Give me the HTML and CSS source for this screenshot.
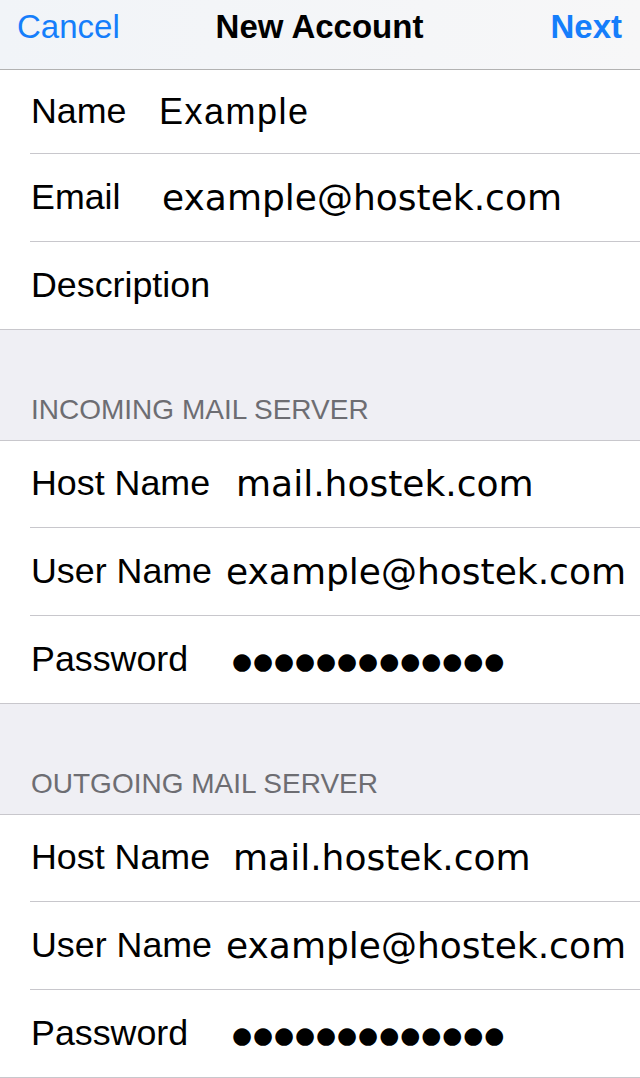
FILE: index.html
```html
<!DOCTYPE html>
<html lang="en">
<head>
    <meta charset="UTF-8">
    <meta name="viewport" content="width=device-width, initial-scale=1.0">
    <title>New Account</title>
    <link rel="stylesheet" href="styles.css">
</head>
<body>
    <!-- Navigation bar -->
    <div class="nav">
        <span class="nav-btn">Cancel</span>
        <span class="nav-title">New Account</span>
        <span class="nav-btn nav-next">Next</span>
    </div>

    <!-- Account details -->
    <div class="group group-account">
        <div class="row row-top">
            <span class="label">Name</span>
            <span class="value value-name">Example</span>
        </div>
        <div class="row">
            <span class="label">Email</span>
            <span class="value value-email">example@hostek.com</span>
        </div>
        <div class="row">
            <span class="label">Description</span>
        </div>
    </div>

    <!-- Incoming server -->
    <div class="section-title">INCOMING MAIL SERVER</div>
    <div class="group group-server">
        <div class="row">
            <span class="label">Host Name</span>
            <span class="value value-host">mail.hostek.com</span>
        </div>
        <div class="row">
            <span class="label">User Name</span>
            <span class="value">example@hostek.com</span>
        </div>
        <div class="row">
            <span class="label">Password</span>
            <span class="value value-password">●●●●●●●●●●●●●</span>
        </div>
    </div>

    <!-- Outgoing server -->
    <div class="section-title">OUTGOING MAIL SERVER</div>
    <div class="group group-server">
        <div class="row">
            <span class="label">Host Name</span>
            <span class="value value-host value-host-out">mail.hostek.com</span>
        </div>
        <div class="row">
            <span class="label">User Name</span>
            <span class="value">example@hostek.com</span>
        </div>
        <div class="row">
            <span class="label">Password</span>
            <span class="value value-password">●●●●●●●●●●●●●</span>
        </div>
    </div>
</body>
</html>
```

FILE: styles.css
```css
/* General page */
body {
    margin: 0;
    background-color: #efeff4;
    font-family: 'Liberation Sans', Arial, sans-serif;
    color: #000;
    overflow: hidden;
}

/* Navigation bar */
.nav {
    display: grid;
    grid-template-columns: 1fr auto 1fr;
    align-items: start;
    height: 70px;
    padding: 10px 18px 0 17px;
    box-sizing: border-box;
    background: linear-gradient(to right, #f1f4f8, #f7f7f8);
    border-bottom: 1px solid #b2b2b2;
    font-size: 33px;
    line-height: 1;
}
.nav-btn {
    color: #157efb;
}
.nav-title {
    font-weight: bold;
}
.nav-next {
    justify-self: end;
    font-weight: bold;
}

/* Grouped table */
.group {
    background: #fff;
    border-top: 1px solid #c8c7cc;
    border-bottom: 1px solid #c8c7cc;
}
.group-account {
    border-top: none;
}
.row {
    display: flex;
    align-items: center;
    height: 87px;
    margin-left: 30px;
    padding-left: 1px;
}
.row + .row {
    border-top: 1px solid #c8c7cc;
}
.group .row:first-child {
    height: 86px;
}
.group .row-top:first-child {
    height: 83px;
}

.label {
    flex-shrink: 0;
    font-size: 35.8px;
    line-height: 1;
}
.group-account .label {
    width: 128px;
}
.group-server .label {
    width: 195px;
}

.value {
    font-family: 'DejaVu Sans', Verdana, sans-serif;
    font-size: 36px;
    line-height: 1;
    white-space: nowrap;
}
.value-name {
    font-family: 'Liberation Sans', Arial, sans-serif;
    letter-spacing: 1.5px;
}
.value-email {
    margin-left: 3px;
}
.value-host {
    margin-left: 10px;
}
.value-host-out {
    margin-left: 7px;
}
.value-password {
    margin: 4px 0 0 6px;
    font-size: 23px;
    letter-spacing: 0.95px;
}

/* Section headers */
.section-title {
    display: flex;
    align-items: flex-end;
    height: 110px;
    box-sizing: border-box;
    padding: 0 0 16px 31px;
    font-size: 28px;
    line-height: 1;
    color: #6d6d72;
}
```
